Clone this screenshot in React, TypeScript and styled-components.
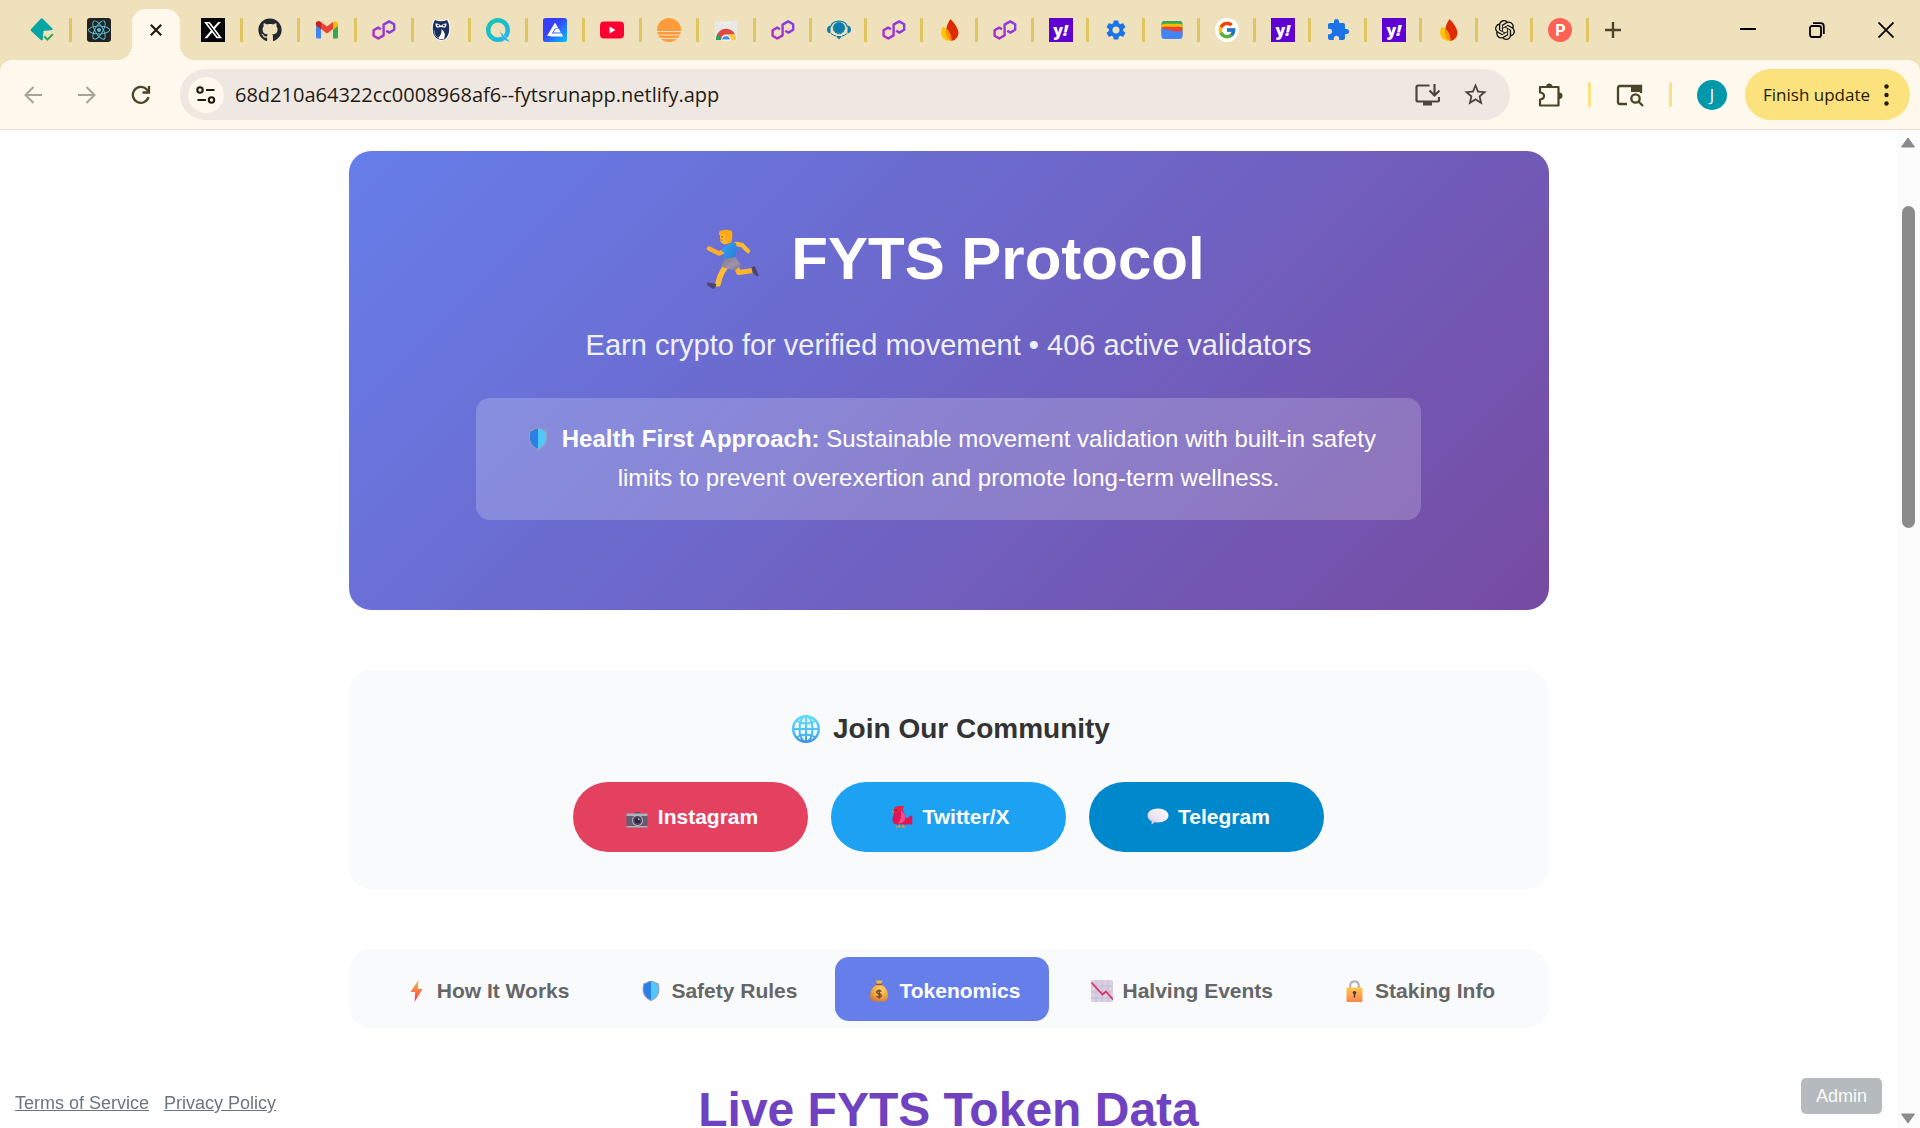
import React from "react";
import styled, { createGlobalStyle } from "styled-components";
import { FaGithub, FaReact } from "react-icons/fa";
import { FaXTwitter } from "react-icons/fa6";
import { FcGoogle } from "react-icons/fc";
import { SiOpenai } from "react-icons/si";
import { MdExtension, MdSettings, MdStarBorder } from "react-icons/md";

const sans = `"Liberation Sans", Arial, sans-serif`;
const chromeFont = `"Open Sans", "Noto Sans", sans-serif`;

const GlobalStyle = createGlobalStyle`
  *, *::before, *::after { box-sizing: border-box; }
  body { margin: 0; background: #fff; font-family: ${sans}; }
  h1, h2, p { margin: 0; }
  button { border: 0; padding: 0; background: none; font: inherit; color: inherit; cursor: pointer; }
  svg { display: block; flex: none; }
`;

/* ---------- window ---------- */

const Window = styled.div`
  display: flex;
  flex-direction: column;
  height: 100vh;
  overflow: hidden;
`;

const TabStrip = styled.header`
  display: flex;
  flex: none;
  height: 60px;
  padding-left: 15px;
  background: #eee1bb;
`;

const TabButton = styled.button`
  display: flex;
  align-items: center;
  justify-content: space-between;
  min-width: 0;
  width: 57px;
  height: 60px;
  padding-left: 15px;
`;

const Divider = styled.span`
  width: 3px;
  height: 24px;
  background: #dfc661;
`;

const ActiveTab = styled.div`
  position: relative;
  display: flex;
  align-items: center;
  justify-content: center;
  width: 48px;
  height: 51px;
  margin: 9px 6px 0 3px;
  padding-bottom: 9px;
  border-radius: 14px 14px 0 0;
  background: #fff8ec;
  &::before,
  &::after {
    content: "";
    position: absolute;
    bottom: 0;
    width: 15px;
    height: 15px;
  }
  &::before {
    right: 100%;
    background: radial-gradient(circle at 0 0, transparent 15px, #fff8ec 15px);
  }
  &::after {
    left: 100%;
    background: radial-gradient(circle at 100% 0, transparent 15px, #fff8ec 15px);
  }
`;

const TightTabs = styled.div`
  display: grid;
  grid-template-columns: repeat(15, 1fr);
  width: 833px;
  & > button {
    width: auto;
  }
`;

const NewTab = styled.button`
  display: flex;
  align-items: center;
  justify-content: center;
  width: 48px;
`;

const WindowControls = styled.div`
  display: flex;
  margin-left: auto;
`;

const ControlButton = styled.button`
  display: flex;
  align-items: center;
  justify-content: center;
  width: 69px;
  height: 60px;
`;

const ToolbarBack = styled.div`
  flex: none;
  background: #eee1bb;
`;

const Toolbar = styled.div`
  display: flex;
  align-items: center;
  height: 70px;
  padding: 0 10px 0 6px;
  border-bottom: 1px solid #e9dfcb;
  border-radius: 12px 12px 0 0;
  background: #fff8ec;
`;

const ToolButton = styled.button`
  display: flex;
  align-items: center;
  justify-content: center;
  width: 54px;
  height: 51px;
`;

const AddressBar = styled.form`
  display: flex;
  flex: 1;
  align-items: center;
  height: 51px;
  margin-left: 12px;
  padding: 0 11px 0 8px;
  border-radius: 26px;
  background: #efe7e1;
`;

const SiteInfo = styled.button`
  display: flex;
  align-items: center;
  justify-content: center;
  width: 36px;
  height: 36px;
  border-radius: 50%;
  background: #fff8ec;
`;

const UrlInput = styled.input`
  flex: 1;
  min-width: 0;
  padding: 0 0 0 11px;
  border: 0;
  outline: 0;
  background: transparent;
  color: #1f1b13;
  font: 20px ${chromeFont};
`;

const AddressAction = styled.button`
  display: flex;
  align-items: center;
  justify-content: center;
  width: 48px;
  height: 48px;
`;

const Extras = styled.div`
  display: flex;
  align-items: center;
  gap: 25px;
  padding: 0 18px 0 27px;
`;

const ExtraButton = styled.button`
  display: flex;
  align-items: center;
  justify-content: center;
`;

const ExtraDivider = styled.span`
  width: 3px;
  height: 25px;
  border-radius: 2px;
  background: #fbe183;
`;

const Avatar = styled.button`
  width: 30px;
  height: 30px;
  border-radius: 50%;
  background: #0198aa;
  color: #fff;
  font: 16px/30px ${chromeFont};
`;

const UpdateButton = styled.button`
  display: flex;
  align-items: center;
  justify-content: space-between;
  width: 165px;
  height: 51px;
  padding: 0 21px 0 18px;
  border-radius: 26px;
  background: #fbe27d;
  color: #241a00;
  font: 17px ${chromeFont};
  white-space: nowrap;
`;

/* ---------- page ---------- */

const Viewport = styled.div`
  display: flex;
  flex: 1;
  min-height: 0;
`;

const Page = styled.main`
  flex: 1;
  min-width: 0;
  overflow: hidden;
  padding: 21px 24px 0;
`;

const Container = styled.div`
  max-width: 1200px;
  margin: 0 auto;
`;

const Hero = styled.section`
  padding: 72px 24px 90px;
  border-radius: 22px;
  background: linear-gradient(135deg, #667eea 0%, #764ba2 100%);
  color: #fff;
  text-align: center;
`;

const HeroTitle = styled.h1`
  display: flex;
  align-items: center;
  justify-content: center;
  gap: 17px;
  font: bold 60px/72px ${sans};
`;

const Emoji = styled.span<{ $w: number }>`
  display: inline-flex;
  flex: none;
  justify-content: center;
  width: ${(p) => p.$w}px;
`;

const InlineEmoji = styled(Emoji)`
  vertical-align: -4px;
`;

const Subtitle = styled.p`
  margin-top: 27px;
  font-size: 29px;
  line-height: 46px;
  opacity: 0.9;
`;

const Notice = styled.p`
  max-width: 945px;
  margin: 30px auto 0;
  padding: 21px 36px 23px;
  border-radius: 14px;
  background: rgba(255, 255, 255, 0.2);
  font-size: 24px;
  line-height: 39px;
`;

const Community = styled.section`
  margin-top: 60px;
  padding: 42px 24px 37px;
  border-radius: 22px;
  background: #f8fafc;
`;

const CommunityTitle = styled.h2`
  display: flex;
  align-items: center;
  justify-content: center;
  gap: 8px;
  color: #333;
  font: bold 28px/34px ${sans};
`;

const SocialRow = styled.div`
  display: flex;
  justify-content: center;
  gap: 23px;
  margin-top: 36px;
`;

const SocialLink = styled.a<{ $color: string }>`
  display: flex;
  align-items: center;
  justify-content: center;
  gap: 6px;
  width: 235px;
  height: 70px;
  border-radius: 36px;
  background: ${(p) => p.$color};
  color: #fff;
  font: bold 21px/24px ${sans};
  text-decoration: none;
`;

const SectionNav = styled.nav`
  display: flex;
  justify-content: center;
  gap: 9px;
  margin-top: 60px;
  padding: 8px 8px 7px;
  border-radius: 22px;
  background: #f8fafc;
`;

const NavButton = styled.button<{ $active?: boolean }>`
  display: flex;
  align-items: center;
  gap: 6px;
  height: 64px;
  padding: 3px 29px 0;
  border-radius: 14px;
  background: ${(p) => (p.$active ? "#667eea" : "transparent")};
  color: ${(p) => (p.$active ? "#fff" : "#666")};
  font: bold 21px/24px ${sans};
  white-space: nowrap;
`;

const DataTitle = styled.h2`
  margin-top: 53px;
  color: #6f42c1;
  font: bold 48px/58px ${sans};
  text-align: center;
`;

const LegalLinks = styled.div`
  position: fixed;
  bottom: 14px;
  left: 15px;
  display: flex;
  gap: 15px;
  font-size: 18px;
  line-height: 21px;
  & > a {
    color: #6c757d;
  }
`;

const AdminButton = styled.button`
  position: fixed;
  right: 38px;
  bottom: 14px;
  height: 36px;
  padding: 0 15px;
  border-radius: 5px;
  background: #b5babe;
  color: #fbfbfb;
  font: 18px/36px ${sans};
`;

const Scrollbar = styled.div`
  display: flex;
  flex: none;
  flex-direction: column;
  align-items: center;
  justify-content: space-between;
  width: 23px;
  padding: 7px 1px 4px 0;
  background: #fcfcfc;
`;

const Track = styled.div`
  flex: 1;
  padding-top: 58px;
`;

const Thumb = styled.div`
  width: 13px;
  height: 322px;
  border-radius: 7px;
  background: #8b8b8b;
`;

/* ---------- tab icons ---------- */

const Fav = styled.span<{ $bg?: string; $radius?: number }>`
  display: flex;
  flex: none;
  align-items: center;
  justify-content: center;
  width: 24px;
  height: 24px;
  border-radius: ${(p) => p.$radius ?? 0}px;
  background: ${(p) => p.$bg ?? "transparent"};
`;

const YahooMark = styled(Fav)`
  background: #5f01d1;
  color: #fff;
  font: 800 16px/20px ${chromeFont};
  & > i {
    font-weight: 800;
  }
`;

const ProductMark = styled(Fav)`
  border-radius: 12px;
  background: #ff6154;
  color: #fff;
  font: bold 16px/24px "Inter", ${sans};
`;

const Netlify = () => (
  <svg width="24" height="24" viewBox="0 0 24 24">
    <path d="M10.600.9q1.200-1.200 2.400 0l9 9q1 1 .4 2.100L13.500 13l-.8 8.900q-1 .8-2.100-.2L1.100 13q-1-1 0-2z" fill="#05a5a5" />
    <path d="M14.200 18.300l3.300 3.300 5.400-5.500" fill="none" stroke="#2ba84f" strokeWidth="2" />
  </svg>
);

const Polygon = () => (
  <svg width="24" height="24" viewBox="0 0 24 24" fill="none" strokeWidth="2.400" strokeLinejoin="round">
    <defs>
      <linearGradient id="poly" x1="0" y1="22" x2="24" y2="2" gradientUnits="userSpaceOnUse">
        <stop offset="0" stopColor="#b42ac4" />
        <stop offset="1" stopColor="#7b42ee" />
      </linearGradient>
    </defs>
    <path
      stroke="url(#poly)"
      d="M9 11.200L6.200 9.600 1.600 12.300v5.400l4.700 2.800 5.300-3.100V6.600l5.600-3.200 5 2.900v5.500l-4.800 2.800-3.200-1.900"
    />
  </svg>
);

const Gmail = () => (
  <svg width="24" height="24" viewBox="0 0 24 24">
    <path d="M1 6v13.500q0 1 1 1h4V10z" fill="#4285f4" />
    <path d="M23 6v13.500q0 1-1 1h-4V10z" fill="#34a853" />
    <path d="M1 5.500C1 3 4 2.600 5.600 3.800L12 8.500l6.200-4.700L18 11l-6 4.500L6 11 1 7z" fill="#ea4335" />
    <path d="M18 4.500c2-2 5-.8 5 1.700V8l-5 4z" fill="#fbbc04" />
    <path d="M1 5.500C1 3 4 2.600 6 4.200V11L1 7.500z" fill="#c5221f" />
  </svg>
);

const Owl = () => (
  <svg width="24" height="24" viewBox="0 0 24 24">
    <path d="M5 1q7 3 14 0 3 4 2 13-2 8-9 9-7-1-9-9Q2 5 5 1z" fill="#fff" />
    <path d="M6 2q6 2.500 12 0 3 4 2 12-1.500 7-7 8-8-1-9-8Q3 6 6 2z" fill="#1b2e5c" />
    <path d="M6.500 5.500q3-.5 5.500 2.200 2.500-2.700 5.500-2.200.3 3-1.500 4.300l-4-.8-4 .8q-1.800-1.300-1.500-4.300z" fill="#fff" />
    <circle cx="9.200" cy="7.600" r="1" fill="#1b2e5c" />
    <circle cx="14.800" cy="7.600" r="1" fill="#1b2e5c" />
    <path d="M12.500 11q5 4 2.500 10-3.500 1-6-1 4-3 3.500-9z" fill="#fff" />
    <path d="M5 12q0 6 4 8" stroke="#7d8db5" fill="none" />
  </svg>
);

const QLogo = () => (
  <svg width="24" height="24" viewBox="0 0 24 24">
    <defs>
      <linearGradient id="q" x1="0" y1="0" x2="1" y2="1">
        <stop offset="0" stopColor="#12c6b0" />
        <stop offset="1" stopColor="#22b3f2" />
      </linearGradient>
    </defs>
    <circle cx="12" cy="12" r="9.800" fill="none" stroke="url(#q)" strokeWidth="4.400" />
    <path d="M13 12.500l10 9.500-1 2h-3z" fill="#eee1bb" />
    <path d="M14 13.500l10 10.500-6.500-2.500z" fill="#20b5ea" />
  </svg>
);

const ALogo = () => (
  <svg width="24" height="24" viewBox="0 0 24 24">
    <defs>
      <linearGradient id="al" x1="0" y1="0" x2="1" y2="1">
        <stop offset=".4" stopColor="#363ff9" />
        <stop offset="1" stopColor="#05c6ff" />
      </linearGradient>
    </defs>
    <rect width="24" height="24" rx="2.500" fill="url(#al)" />
    <path d="M12 4.500l3.400 6h-3.600L7.500 18H4zM12.500 11h3.400l2 3.600h-7.500zM9 15.500h9.500l1.700 3H7.300z" fill="#fff" />
  </svg>
);

const YouTube = () => (
  <svg width="24" height="24" viewBox="0 0 24 24">
    <rect y="3.500" width="24" height="17" rx="4" fill="#f03" />
    <path d="M9.500 8.500v7l6-3.500z" fill="#fff" />
  </svg>
);

const Sunset = () => (
  <svg width="24" height="24" viewBox="0 0 24 24">
    <circle cx="12" cy="12" r="12" fill="#ff9a3d" />
    <path d="M0 13.500h24M0 17h24M2 20.500h20" stroke="#eee1bb" strokeWidth="1.200" />
  </svg>
);

const WebStore = () => (
  <svg width="24" height="24" viewBox="0 0 24 24">
    <path d="M1 3h22v19H1z" fill="#e8e8e8" />
    <path d="M8 4h8v1.500H8z" fill="#fff3d2" />
    <path d="M2 22q-.5-4 2.500-7.500L8.500 22z" fill="#1fa463" />
    <path d="M3.500 16a9.800 9.800 0 0 1 17.500.500l-9 0a5 5 0 0 0-4.800 4.500z" fill="#dd4b3e" />
    <path d="M13 16.500h8q1.700 2.500 1 5.500h-6z" fill="#ffcd41" />
    <path d="M7.600 22a4.400 4.400 0 0 1 8.800 0z" fill="#4688f1" stroke="#fff" />
  </svg>
);

const Headset = () => (
  <svg width="24" height="24" viewBox="0 0 24 24">
    <path d="M3.500 9a8.800 7.800 0 0 1 17 0" fill="none" stroke="#0a7dab" strokeWidth="1.200" />
    <circle cx="12" cy="10" r="5.800" fill="#0a7dab" stroke="#0a7dab" strokeDasharray="2 1" />
    <path d="M3.500 7.500v8Q0 15 0 11.500t3.500-4zM20.500 7.500v8q3.500-.5 3.500-4t-3.500-4zM9 18h6l-3 3.500z" fill="#0a7dab" />
    <path d="M4 15.500q3 2.500 5 2.500M20 15.500q-3 2.500-5 2.500" stroke="#0a7dab" fill="none" />
  </svg>
);

const Flame = () => (
  <svg width="24" height="24" viewBox="0 0 24 24">
    <path d="M12.500 1q7.500 7.500 8 14-.5 6.500-7 8-5.500-2-5.500-8Q8 7 12.500 1z" fill="#dd2c00" />
    <path d="M5 8.500q8.500 4.500 8.500 14.500-6.500 0-9.500-4.500Q2 13.500 5 8.500z" fill="#ffc400" />
    <path d="M8 10.500q5.500 4.500 5.500 12.500-5.500-2-5.500-8z" fill="#ff9100" />
  </svg>
);

const Wallet = () => (
  <svg width="24" height="24" viewBox="0 0 24 24">
    <rect x="1.500" y="3" width="21" height="12" rx="3" fill="#34a853" />
    <rect x="1.500" y="5.800" width="21" height="12" rx="3" fill="#fbbc04" />
    <rect x="1.500" y="8.800" width="21" height="10" rx="2" fill="#ea4335" />
    <path d="M1.500 10.500l14 3q4 1 7-2V18q0 3-3 3h-15q-3 0-3-3z" fill="#4285f4" />
  </svg>
);

const Yahoo = () => (
  <YahooMark>
    y<i>!</i>
  </YahooMark>
);

/* ---------- page emoji drawings ---------- */

const Runner = () => (
  <svg width="54" height="60" viewBox="0 0 54 60" fill="none" strokeLinecap="round" strokeLinejoin="round">
    <defs>
      <linearGradient id="shirt" x1="0" y1="0" x2="1" y2="1">
        <stop offset="0" stopColor="#2da9f2" />
        <stop offset="1" stopColor="#2d73d8" />
      </linearGradient>
      <linearGradient id="short" x1="0" y1="0" x2="1" y2="1">
        <stop offset="0" stopColor="#7d7391" />
        <stop offset=".6" stopColor="#a095a8" />
        <stop offset="1" stopColor="#776c88" />
      </linearGradient>
    </defs>
    <path d="M30 15l6 1 6 6" stroke="#ffb92e" strokeWidth="4.500" />
    <path d="M31 39l1.500 4.500 15-2" stroke="#ffb52b" strokeWidth="5" />
    <path d="M19.500 38q-6 8-7.500 17" stroke="#ffbd32" strokeWidth="5.500" />
    <path d="M45.500 38.500l3-1.500q2.500 4 4.200 10l-2 .3-4.200-4z" fill="#4c446e" />
    <path d="M1.500 53.500l9 1.500-2 4.500q-1.500.6-3-.5l-4.500-3z" fill="#4c446e" />
    <path d="M3 19.500l10 5 6-3" stroke="#ffae2b" strokeWidth="4.500" />
    <path d="M19 17q6-4.500 11-3l1 6.500-2.500 9-11 4 .8-10-3.500-2z" fill="url(#shirt)" />
    <path d="M18.500 29.500l11-1.500 5.500 8.500-6 5-14-3.800z" fill="url(#short)" />
    <path d="M14 4h11v9.500l-6 2q-5-1-5-6z" fill="#ffb62e" />
    <path d="M13 6q-1-5 4.500-4.700 2.500-1.300 7 .2 2 .5 2 4.500l-1 7-3.500 1-2-4-2-4.500z" fill="#ffab17" />
    <path d="M14.800 10.500l1.600 1.200" stroke="#d95542" strokeWidth="1" />
    <circle cx="16" cy="7.800" r=".7" fill="#5a3e2c" />
  </svg>
);

const Shield = ({ h }: { h: number }) => (
  <svg width={h - 4} height={h} viewBox="0 0 20 24">
    <path d="M10 .7q3 0 4 1 1.500 1.500 4.500 1.800 1 4 .8 8.500-.8 7.500-9.300 11.300Q1.500 19.500.7 12q-.2-4.500.8-8.500Q4.500 3.200 6 1.700q1-1 4-1z" fill="#9e9bb4" />
    <path d="M10 1.800q-2.700 0-3.700 1Q5 4 2.500 4.500q-.8 3.500-.6 7.500Q2.500 18.500 10 22z" fill="#2b80e6" />
    <path d="M10 1.800q2.700 0 3.700 1Q15 4 17.500 4.500q.8 3.500.6 7.500-.6 6.500-8.100 10z" fill="#52c7fd" />
  </svg>
);

const Globe = () => (
  <svg width="28" height="28" viewBox="0 0 28 28">
    <defs>
      <linearGradient id="globe" x1="0" y1="0" x2="0" y2="28" gradientUnits="userSpaceOnUse">
        <stop offset="0" stopColor="#62dcff" />
        <stop offset=".6" stopColor="#4cbef6" />
        <stop offset="1" stopColor="#3c92dd" />
      </linearGradient>
    </defs>
    <circle cx="14" cy="14" r="13" fill="#e9f7ff" />
    <g fill="none" stroke="url(#globe)" strokeWidth="2">
      <circle cx="14" cy="14" r="12.800" strokeWidth="2.400" />
      <ellipse cx="14" cy="14" rx="6.500" ry="13" />
      <path d="M14 1v26M1 14h26M4 5.500q10 6 20 0M4 22.500q10-6 20 0" />
    </g>
  </svg>
);

const Camera = () => (
  <svg width="22" height="22" viewBox="0 0 22 22">
    <path d="M7.500 8l1.500-2h5l1.500 2z" fill="#5b5566" />
    <rect x=".5" y="7.500" width="21" height="14" rx="1" fill="#635d70" />
    <path d="M.5 7.500h21V10H.5zM.5 20h21v1.500H.5z" fill="#b7b1bd" />
    <circle cx="11.500" cy="14.500" r="5.500" fill="#b8b2be" />
    <circle cx="11.500" cy="14.500" r="4.500" fill="#4b465a" />
    <circle cx="11.500" cy="14.500" r="2.500" fill="#272238" />
    <circle cx="12.700" cy="13.200" r="1" fill="#b8a8da" />
  </svg>
);

const Bird = () => (
  <svg width="22" height="22" viewBox="0 0 22 22">
    <path d="M8.500 17v3.500M12 17v3.500M5 20.900h4.500M10.500 20.900h4" stroke="#e8962e" strokeWidth="1.300" />
    <path d="M3 4.500L.5 5.500l2 1.500z" fill="#f5a33b" />
    <path d="M2.500 5Q3 .5 8 .3h5L11.500 3l3.500 9.500 5.500-3.200.8.700v8.500H6q-5-.5-4.500-6 .2-2.500 1.700-4.500z" fill="#df1553" />
    <path d="M10 4q5 4.500 4 9.500-2 4.500-7 3.500 4-4 3-13z" fill="#f54b8c" />
    <path d="M2.500 5Q3 .5 8 .3h5L11 3.200Q8 7 3 6z" fill="#e8243b" />
    <circle cx="5" cy="4.200" r=".8" fill="#47203c" />
  </svg>
);

const Bubble = () => (
  <svg width="22" height="22" viewBox="0 0 22 22">
    <defs>
      <linearGradient id="bub" x1="0" y1="1" x2="1" y2="0">
        <stop offset="0" stopColor="#cbb8dc" />
        <stop offset=".4" stopColor="#ece4f2" />
        <stop offset="1" stopColor="#fdfbff" />
      </linearGradient>
    </defs>
    <path d="M11 2.500c6 0 10.500 3 10.500 7s-4.500 7-10.500 7l-3.500-.3-2.500 2.300q-.7 0-.5-.7l.2-2.600C2 14 .5 12 .5 9.500c0-4 4.500-7 10.500-7z" fill="url(#bub)" />
  </svg>
);

const Bolt = () => (
  <svg width="13" height="22" viewBox="0 0 13 22">
    <defs>
      <linearGradient id="bolt" x1="0" y1="0" x2="0" y2="1">
        <stop offset="0" stopColor="#fbb449" />
        <stop offset=".5" stopColor="#fb7a45" />
        <stop offset="1" stopColor="#f2384d" />
      </linearGradient>
    </defs>
    <path d="M8.500 0L.5 12h4.700L4.500 22 12.500 9H7.800z" fill="url(#bolt)" />
  </svg>
);

const MoneyBag = () => (
  <svg width="18" height="22" viewBox="0 0 18 22">
    <defs>
      <radialGradient id="bag" cx=".6" cy=".3" r=".8">
        <stop offset="0" stopColor="#ffd665" />
        <stop offset=".6" stopColor="#eda139" />
        <stop offset="1" stopColor="#cf6e3b" />
      </radialGradient>
    </defs>
    <path d="M6 0l2 1 1.300-1 1.200 1 2-.8-1.300 4H7z" fill="#f6b740" />
    <path d="M7 4.500h4.500Q18 8.500 18 15.500q0 6-4 6H4q-4 0-4-6Q0 8.500 7 4.500z" fill="url(#bag)" />
    <path d="M6 4.400h6" stroke="#8b573d" strokeWidth="1.500" />
    <path d="M11.500 11.500q-2.500-1.800-4.500-.2-1 1.800 2 2.500t2 2.700q-2 1.600-4.500-.2M9.200 9.500v9" fill="none" stroke="#744333" strokeWidth="1.400" />
  </svg>
);

const ChartDown = () => (
  <svg width="22" height="22" viewBox="0 0 22 22">
    <rect width="22" height="22" rx="1.500" fill="#d9d0e3" />
    <path d="M5 0v22M11 0v22M17 0v22M0 6h22M0 12h22M0 18h22" stroke="#c6bcd4" />
    <path d="M.5 2.500l11 12 3.500-3 7 8" fill="none" stroke="#e02f68" strokeWidth="1.800" />
  </svg>
);

const Lock = () => (
  <svg width="17" height="22" viewBox="0 0 17 22">
    <defs>
      <linearGradient id="lock" x1="0" y1="0" x2="0" y2="1">
        <stop offset="0" stopColor="#ffc849" />
        <stop offset="1" stopColor="#f8844e" />
      </linearGradient>
    </defs>
    <path d="M4.200 8V5.500Q4.500 1.300 8.500 1.300t4.300 4.200V8" fill="none" stroke="#b9b2be" strokeWidth="2.200" />
    <rect x=".5" y="7.500" width="16" height="14.500" rx="1" fill="url(#lock)" />
    <circle cx="8.500" cy="12.800" r="1.800" fill="#463a55" />
    <path d="M8.500 13v4.500" stroke="#463a55" strokeWidth="1.500" />
  </svg>
);

/* ---------- data ---------- */

type TabItem = { name: string; icon: React.ReactNode };

const wideTabs: TabItem[] = [
  { name: "X", icon: <Fav $bg="#000"><FaXTwitter size={20} color="#fff" /></Fav> },
  { name: "GitHub", icon: <FaGithub size={24} color="#24292f" /> },
  { name: "Gmail", icon: <Gmail /> },
  { name: "Polygon", icon: <Polygon /> },
  { name: "Owl", icon: <Owl /> },
  { name: "Quick", icon: <QLogo /> },
  { name: "Alchemy", icon: <ALogo /> },
  { name: "YouTube", icon: <YouTube /> },
  { name: "Sunset", icon: <Sunset /> },
];

const tightTabs: TabItem[] = [
  { name: "Polygon", icon: <Polygon /> },
  { name: "Support", icon: <Headset /> },
  { name: "Polygon", icon: <Polygon /> },
  { name: "Firebase", icon: <Flame /> },
  { name: "Polygon", icon: <Polygon /> },
  { name: "Yahoo", icon: <Yahoo /> },
  { name: "Settings", icon: <MdSettings size={24} color="#1a73e8" /> },
  { name: "Wallet", icon: <Wallet /> },
  { name: "Google", icon: <Fav $bg="#fff" $radius={12}><FcGoogle size={20} /></Fav> },
  { name: "Yahoo", icon: <Yahoo /> },
  { name: "Extensions", icon: <MdExtension size={24} color="#1a73e8" /> },
  { name: "Yahoo", icon: <Yahoo /> },
  { name: "Firebase", icon: <Flame /> },
  { name: "ChatGPT", icon: <Fav><SiOpenai size={20} color="#111" /></Fav> },
  { name: "Product", icon: <ProductMark>P</ProductMark> },
];

const socials = [
  { name: "Instagram", color: "#e4405f", icon: <Camera /> },
  { name: "Twitter/X", color: "#1da1f2", icon: <Bird /> },
  { name: "Telegram", color: "#0088cc", icon: <Bubble /> },
];

const sections = [
  { name: "How It Works", icon: <Bolt /> },
  { name: "Safety Rules", icon: <Shield h={22} /> },
  { name: "Tokenomics", icon: <MoneyBag /> },
  { name: "Halving Events", icon: <ChartDown /> },
  { name: "Staking Info", icon: <Lock /> },
];

const Tab = ({ name, icon, last }: TabItem & { last?: boolean }) => (
  <TabButton type="button" aria-label={name}>
    {icon}
    {!last && <Divider />}
  </TabButton>
);

const BrowserTabs = () => (
  <TabStrip>
    <Tab name="Netlify" icon={<Netlify />} />
    <Tab name="React" icon={<Fav $bg="#222" $radius={3}><FaReact size={22} color="#58c4dc" /></Fav>} last />
    <ActiveTab>
      <button type="button" aria-label="Close tab">
        <svg width="12" height="12" viewBox="0 0 12 12" stroke="#1f1b13" strokeWidth="2.200">
          <path d="M.8.8l10.400 10.400M11.200.8L.8 11.200" />
        </svg>
      </button>
    </ActiveTab>
    {wideTabs.map((t) => (
      <Tab key={t.name} {...t} />
    ))}
    <Tab name="Web Store" icon={<WebStore />} />
    <TightTabs>
      {tightTabs.map((t, i) => (
        <Tab key={i} {...t} />
      ))}
    </TightTabs>
    <NewTab type="button" aria-label="New tab">
      <svg width="16" height="16" viewBox="0 0 16 16" stroke="#4b4428" strokeWidth="2.400">
        <path d="M8 0v16M0 8h16" />
      </svg>
    </NewTab>
    <WindowControls>
      <ControlButton type="button" aria-label="Minimize">
        <svg width="16" height="16" viewBox="0 0 16 16">
          <path d="M0 7h16" stroke="#000" strokeWidth="2" />
        </svg>
      </ControlButton>
      <ControlButton type="button" aria-label="Restore">
        <svg width="16" height="16" viewBox="0 0 16 16" fill="none" stroke="#000" strokeWidth="1.800">
          <rect x="1" y="4" width="11" height="11" rx="2" />
          <path d="M4 1.200h7.500q3.300 0 3.300 3.300V12" />
        </svg>
      </ControlButton>
      <ControlButton type="button" aria-label="Close">
        <svg width="16" height="16" viewBox="0 0 16 16" stroke="#000" strokeWidth="1.800">
          <path d="M.5.5l15 15M15.500.5l-15 15" />
        </svg>
      </ControlButton>
    </WindowControls>
  </TabStrip>
);

const BrowserToolbar = () => (
  <ToolbarBack>
    <Toolbar>
      <ToolButton type="button" aria-label="Back">
        <svg width="18" height="18" viewBox="0 0 18 18" fill="none" stroke="#a8a494" strokeWidth="2">
          <path d="M18 9H1.500M9.500 1L1.500 9l8 8" />
        </svg>
      </ToolButton>
      <ToolButton type="button" aria-label="Forward">
        <svg width="18" height="18" viewBox="0 0 18 18" fill="none" stroke="#a8a494" strokeWidth="2">
          <path d="M0 9h16.500M8.500 1l8 8-8 8" />
        </svg>
      </ToolButton>
      <ToolButton type="button" aria-label="Reload">
        <svg width="20" height="20" viewBox="0 0 20 20" fill="none" stroke="#4b4428" strokeWidth="2.300">
          <path d="M17.500 12.200A8 8 0 1 1 15.800 4.500L18 6.800M18 1v6.500h-6.500" />
        </svg>
      </ToolButton>
      <AddressBar onSubmit={(e) => e.preventDefault()}>
        <SiteInfo type="button" aria-label="Site information">
          <svg width="20" height="18" viewBox="0 0 20 18" fill="none" stroke="#1f1b13" strokeWidth="2.100">
            <circle cx="4" cy="4" r="2.700" />
            <path d="M10 4h8.500M1.500 14H10" />
            <circle cx="15.500" cy="14" r="2.700" />
          </svg>
        </SiteInfo>
        <UrlInput aria-label="Address" defaultValue="68d210a64322cc0008968af6--fytsrunapp.netlify.app" />
        <AddressAction type="button" aria-label="Install app">
          <svg width="25" height="24" viewBox="0 0 25 24" fill="none" stroke="#4b463c" strokeWidth="2.200">
            <path d="M14.500 2.500H3Q1.500 2.500 1.500 4v13q0 1.500 1.500 1.500h19.500q1.500 0 1.500-1.500v-3" />
            <path d="M8 19h9v3.500H8z" fill="#4b463c" stroke="none" />
            <path d="M19.500 1v10.500M14.500 7.500l5 5 5-5" />
          </svg>
        </AddressAction>
        <AddressAction type="button" aria-label="Bookmark">
          <MdStarBorder size={27} color="#4b463c" />
        </AddressAction>
      </AddressBar>
      <Extras>
        <ExtraButton type="button" aria-label="Extensions">
          <svg width="26" height="26" viewBox="0 0 26 26">
            <path
              d="M3 5h18.500v18.500H3v-6q4-.5 4-3.500T3 10.500z"
              fill="none"
              stroke="#4b4428"
              strokeWidth="2.200"
              strokeLinejoin="round"
            />
            <path d="M9 5q0-3.500 3.200-3.500T15.500 5zM22 10.500q3.500 0 3.500 3.200T22 17z" fill="#4b4428" />
          </svg>
        </ExtraButton>
        <ExtraDivider />
        <ExtraButton type="button" aria-label="Search tabs">
          <svg width="28" height="24" viewBox="0 0 28 24" fill="none" stroke="#4b4428" strokeWidth="2.300">
            <path d="M11 21H4q-2 0-2-2V5q0-2 2-2h21v7" />
            <path d="M15 2h9q2 0 2 2v5H15z" fill="#4b4428" stroke="none" />
            <circle cx="19.500" cy="15.500" r="4.200" />
            <path d="M22.500 18.500l4.500 4.500" />
          </svg>
        </ExtraButton>
        <ExtraDivider />
        <Avatar type="button">J</Avatar>
      </Extras>
      <UpdateButton type="button">
        Finish update
        <svg width="5" height="22" viewBox="0 0 5 22" fill="#241a00">
          <circle cx="2.500" cy="2.500" r="2.200" />
          <circle cx="2.500" cy="11" r="2.200" />
          <circle cx="2.500" cy="19.500" r="2.200" />
        </svg>
      </UpdateButton>
    </Toolbar>
  </ToolbarBack>
);

export default function App() {
  return (
    <Window>
      <GlobalStyle />
      <BrowserTabs />
      <BrowserToolbar />
      <Viewport>
        <Page>
          <Container>
            <Hero>
              <HeroTitle>
                <Emoji $w={82}><Runner /></Emoji>
                FYTS Protocol
              </HeroTitle>
              <Subtitle>Earn crypto for verified movement • 406 active validators</Subtitle>
              <Notice>
                <InlineEmoji $w={34}><Shield h={24} /></InlineEmoji>{" "}
                <strong>Health First Approach:</strong> Sustainable movement validation with built-in safety limits to
                prevent overexertion and promote long-term wellness.
              </Notice>
            </Hero>
            <Community>
              <CommunityTitle>
                <Emoji $w={38}><Globe /></Emoji>
                Join Our Community
              </CommunityTitle>
              <SocialRow>
                {socials.map((s) => (
                  <SocialLink key={s.name} href="#" $color={s.color}>
                    <Emoji $w={29}>{s.icon}</Emoji>
                    {s.name}
                  </SocialLink>
                ))}
              </SocialRow>
            </Community>
            <SectionNav>
              {sections.map((s) => (
                <NavButton key={s.name} type="button" $active={s.name === "Tokenomics"}>
                  <Emoji $w={29}>{s.icon}</Emoji>
                  {s.name}
                </NavButton>
              ))}
            </SectionNav>
            <DataTitle>Live FYTS Token Data</DataTitle>
          </Container>
          <LegalLinks>
            <a href="#">Terms of Service</a>
            <a href="#">Privacy Policy</a>
          </LegalLinks>
          <AdminButton type="button">Admin</AdminButton>
        </Page>
        <Scrollbar>
          <svg width="16" height="11" viewBox="0 0 16 11">
            <path d="M8 1l6.500 9h-13z" fill="#8b8b8b" stroke="#8b8b8b" strokeLinejoin="round" />
          </svg>
          <Track>
            <Thumb />
          </Track>
          <svg width="16" height="11" viewBox="0 0 16 11">
            <path d="M8 10l6.500-9h-13z" fill="#8b8b8b" stroke="#8b8b8b" strokeLinejoin="round" />
          </svg>
        </Scrollbar>
      </Viewport>
    </Window>
  );
}
